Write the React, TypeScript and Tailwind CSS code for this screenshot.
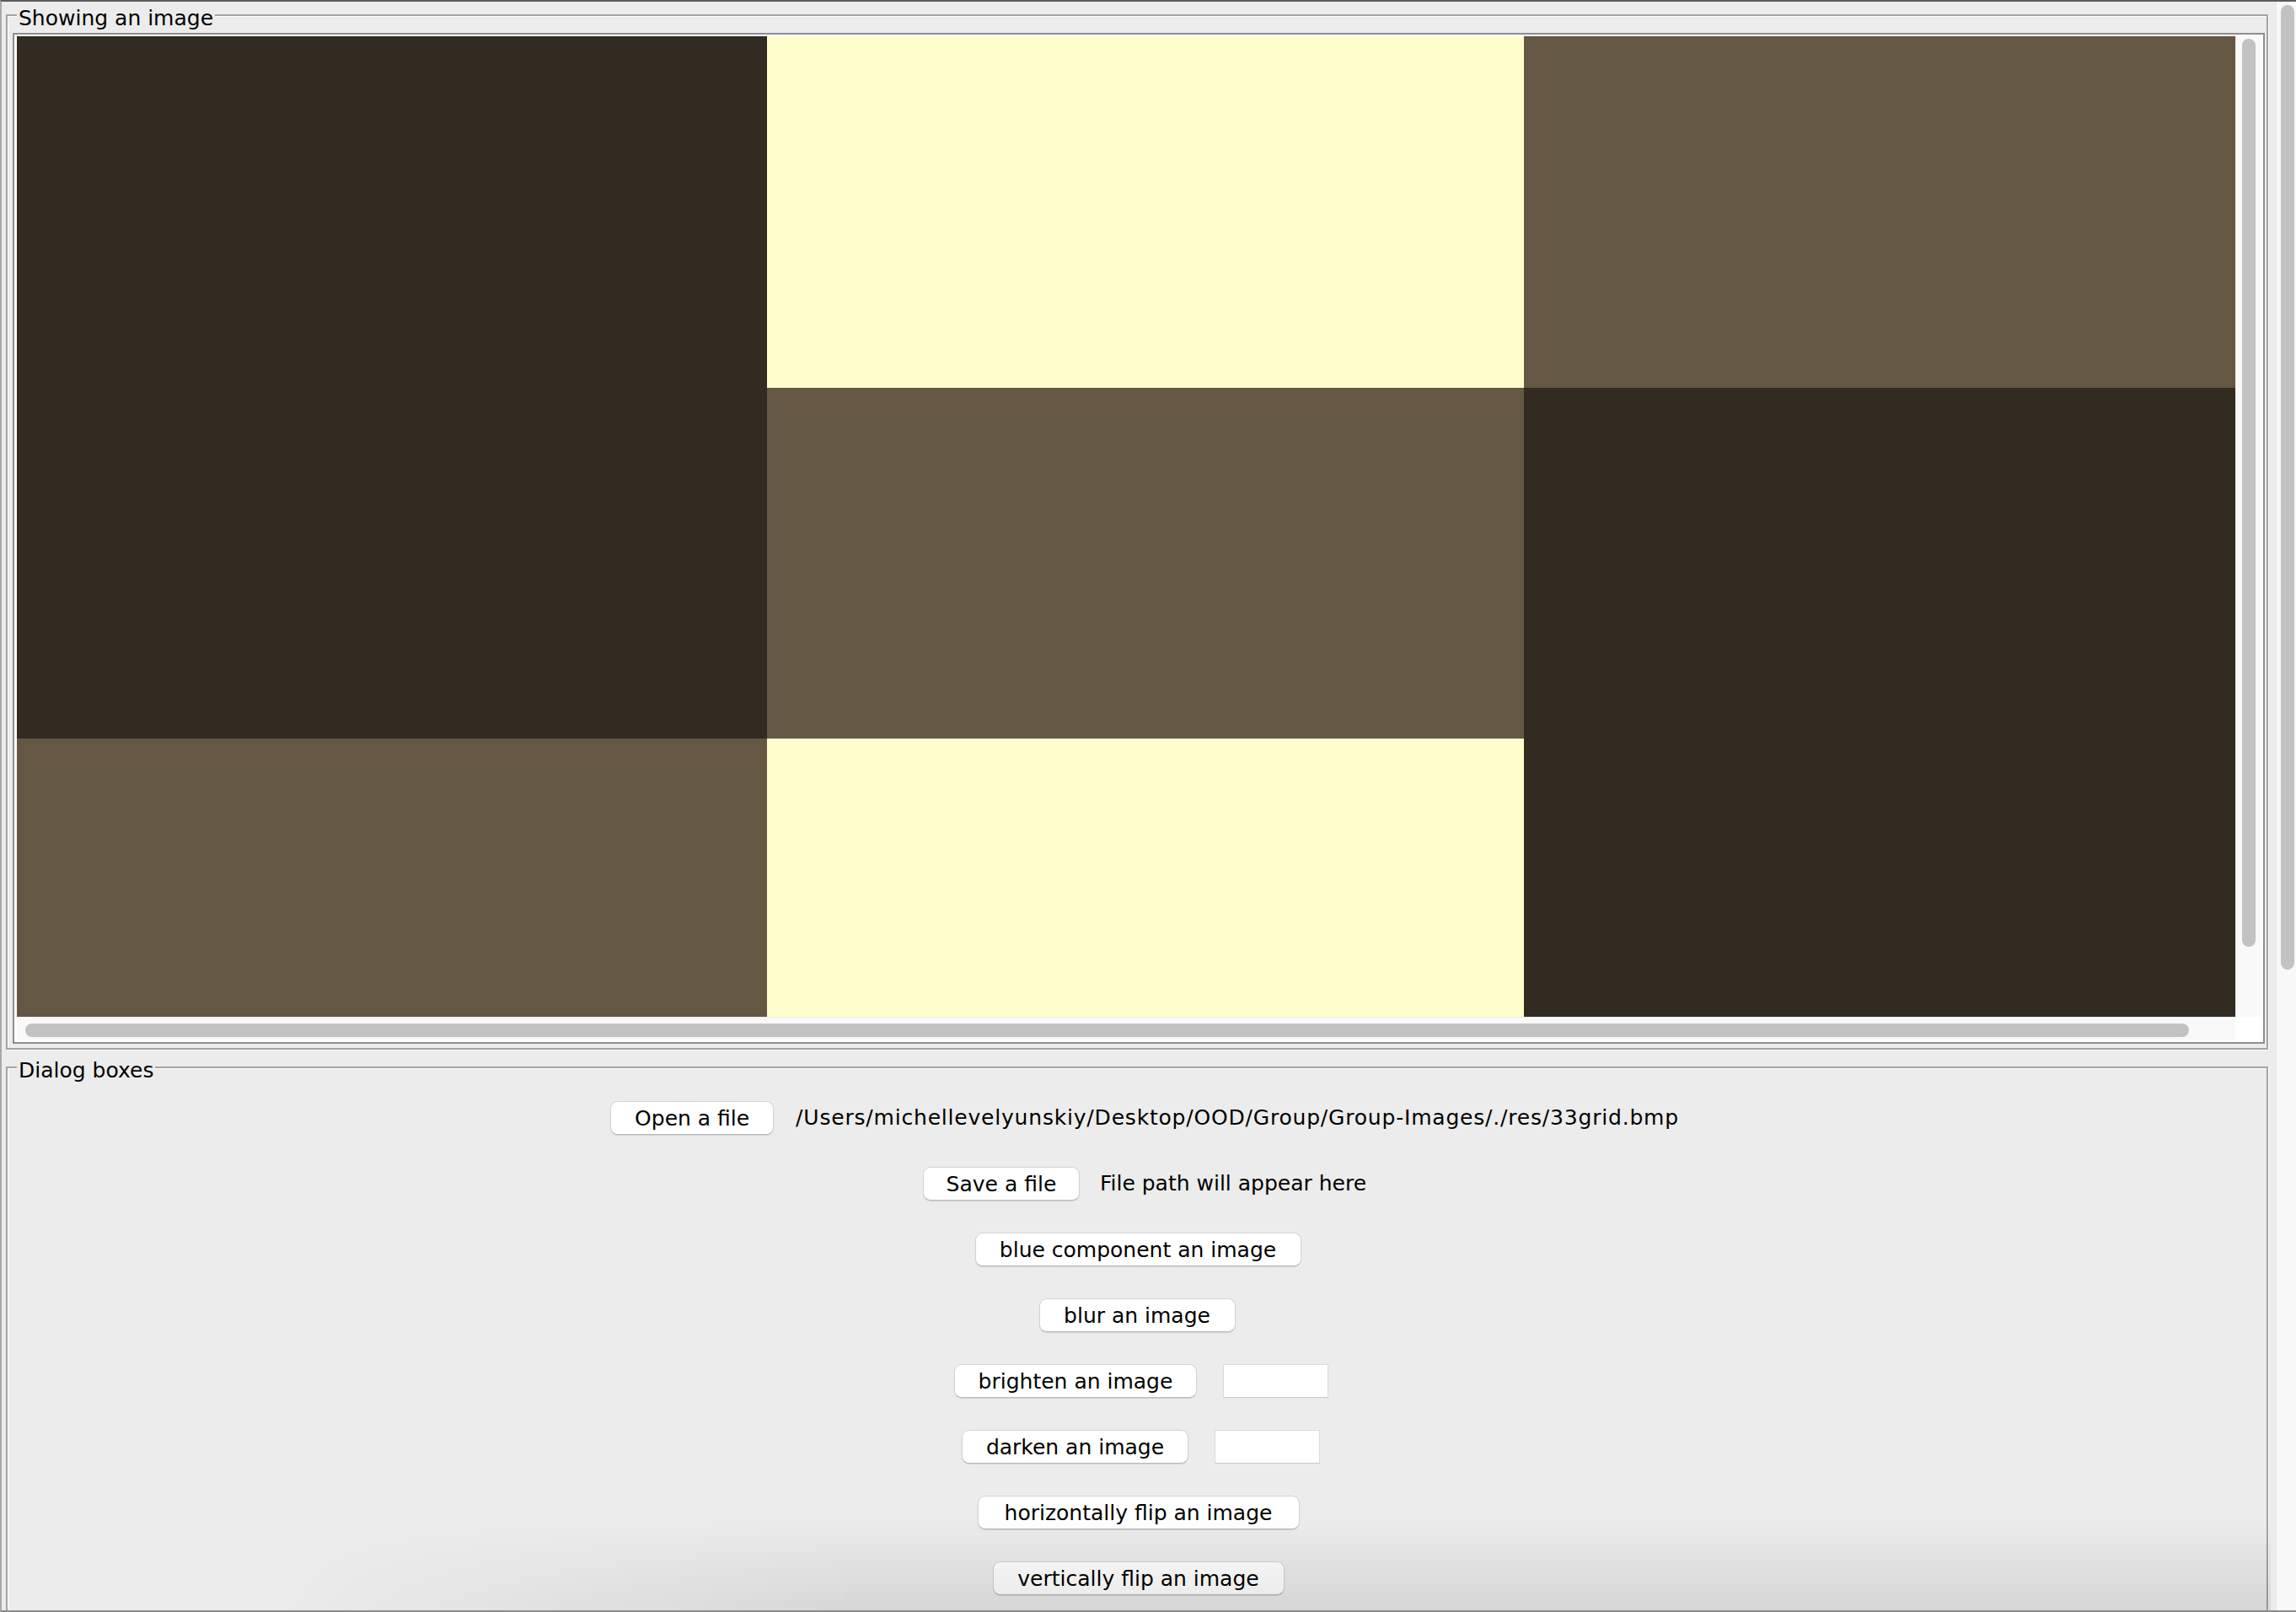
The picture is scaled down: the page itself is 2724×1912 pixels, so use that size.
import React from "react";

const DARK = "bg-[#312b21]";
const YEL = "bg-[#fffdcb]";
const BRN = "bg-[#645744]";

function Btn({ label, w }: { label: string; w: string }) {
  return (
    <div
      className={`${w} h-[40px] shrink-0 rounded-[9px] bg-white border border-[#d3d3d3] border-b-[#b9b9b9] shadow-[0_1px_1px_rgba(0,0,0,0.12)] flex items-center justify-center text-black text-[25px] leading-none`}
    >
      {label}
    </div>
  );
}

function Field() {
  return <div className="w-[125px] h-[40px] shrink-0 bg-white border border-[#dadada] border-b-[#c8c8c8]" />;
}

export default function App() {
  const cells = [DARK, YEL, BRN, DARK, BRN, DARK, BRN, YEL, DARK];
  return (
    <div
      className="relative w-[2724px] h-[1912px] overflow-hidden bg-[#ececec] border-t-2 border-t-[#5c5c5c] border-b-2 border-b-[#8c8c8c] border-l-2 border-l-[#a9a9a9] flex flex-row text-black antialiased"
      style={{ fontFamily: '"DejaVu Sans", "Noto Sans", sans-serif' }}
    >
      {/* main column */}
      <div className="flex-1 flex flex-col pl-[5px] pr-[9px]">
        {/* Showing an image panel */}
        <div className="relative mt-[15px] h-[1228px] border-2 border-[#a3a3a3] shadow-[inset_1px_1px_0_#ffffff,1px_1px_0_#ffffff] pt-[20px] pl-[6px] pr-[2px] pb-[5px] flex">
          <span className="absolute left-[11px] top-[-12px] px-[2px] bg-[#ececec] text-[25px] leading-[30px]">
            Showing an image
          </span>
          <div className="flex-1 border-2 border-[#8e8e8e] bg-white pt-[2px] pb-[2px] pl-[3px] pr-[2px] grid grid-cols-[1fr_31px] grid-rows-[1fr_28px]">
            <div className="overflow-hidden">
              <div className="grid grid-cols-[890px_898px_890px] grid-rows-[417px_416px_417px]">
                {cells.map((c, i) => (
                  <div key={i} className={c} />
                ))}
              </div>
            </div>
            <div className="bg-[#f9f9f9] border-l border-[#eeeeee] pt-[3px] pl-[7px]">
              <div className="w-[16px] h-[1077px] rounded-full bg-[#c2c2c2]" />
            </div>
            <div className="bg-[#f9f9f9] border-t border-[#eeeeee] pt-[7px] pl-[10px]">
              <div className="w-[2567px] h-[16px] rounded-full bg-[#c2c2c2]" />
            </div>
            <div className="bg-white" />
          </div>
        </div>

        {/* Dialog boxes panel */}
        <div className="relative mt-[20px] h-[800px] shrink-0 border-2 border-[#a3a3a3] shadow-[inset_1px_1px_0_#ffffff,1px_1px_0_#ffffff] pt-[20px] flex flex-col">
          <span className="absolute left-[11px] top-[-12px] px-[2px] bg-[#ececec] text-[25px] leading-[30px]">
            Dialog boxes
          </span>
          <div className="h-[78px] flex items-center justify-center">
            <div className="ml-[18px] flex items-center gap-[26px]">
              <Btn label="Open a file" w="w-[194px]" />
              <span className="text-[25px] tracking-[0.8px] whitespace-nowrap">
                /Users/michellevelyunskiy/Desktop/OOD/Group/Group-Images/./res/33grid.bmp
              </span>
            </div>
          </div>
          <div className="h-[78px] flex items-center justify-center">
            <div className="ml-[18px] flex items-center gap-[24px]">
              <Btn label="Save a file" w="w-[186px]" />
              <span className="text-[25px] whitespace-nowrap">File path will appear here</span>
            </div>
          </div>
          <div className="h-[78px] flex items-center justify-center">
            <div className="ml-[2px]">
              <Btn label="blue component an image" w="w-[387px]" />
            </div>
          </div>
          <div className="h-[78px] flex items-center justify-center">
            <Btn label="blur an image" w="w-[233px]" />
          </div>
          <div className="h-[78px] flex items-center justify-center">
            <div className="ml-[10px] flex items-center gap-[31px]">
              <Btn label="brighten an image" w="w-[288px]" />
              <Field />
            </div>
          </div>
          <div className="h-[78px] flex items-center justify-center">
            <div className="ml-[9px] flex items-center gap-[31px]">
              <Btn label="darken an image" w="w-[269px]" />
              <Field />
            </div>
          </div>
          <div className="h-[78px] flex items-center justify-center">
            <div className="ml-[3px]">
              <Btn label="horizontally flip an image" w="w-[382px]" />
            </div>
          </div>
          <div className="h-[78px] flex items-center justify-center">
            <div className="ml-[3px]">
              <Btn label="vertically flip an image" w="w-[346px]" />
            </div>
          </div>
        </div>
      </div>

      {/* outer vertical scrollbar */}
      <div className="w-[24px] shrink-0 bg-[#f8f8f8] border-l border-[#e9e9e9] pt-[4px] pl-[5px]">
        <div className="w-[16px] h-[1144px] rounded-full bg-[#c2c2c2]" />
      </div>

      {/* bottom window shadow */}
      <div className="pointer-events-none absolute left-[300px] right-[30px] bottom-0 h-[110px] bg-[linear-gradient(to_bottom,rgba(0,0,0,0),rgba(0,0,0,0.09))] [mask-image:linear-gradient(to_right,transparent,black_30%)]" />
    </div>
  );
}
